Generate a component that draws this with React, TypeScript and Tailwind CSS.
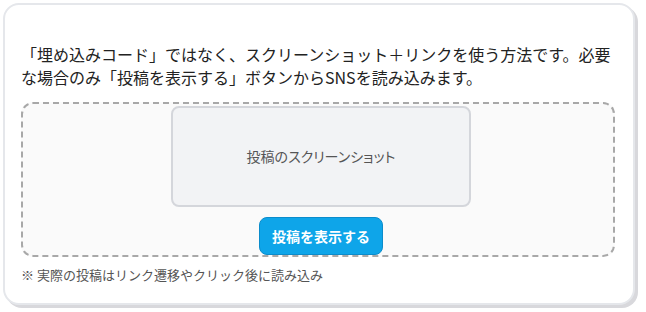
export default function App() {
  return (
    <div className="w-[646px] h-[312px] bg-white p-[3px] font-['Noto_Sans_CJK_JP','Noto_Sans',sans-serif]">
      <div className="w-[632px] h-[302px] rounded-[16px] border-2 border-[#e5e7eb] bg-white shadow-[3px_3px_0_#d8d8dc] pt-[38px] pl-[16px] pr-[18px]">
        <p className="text-[16px] leading-[23px] text-[#222]">
          「埋め込みコード」ではなく、スクリーンショット＋リンクを使う方法です。必要な場合のみ「投稿を表示する」ボタンからSNSを読み込みます。
        </p>

        {/* embed preview */}
        <div className="mt-[13px] h-[155px] rounded-[12px] border-2 border-dashed border-[#a8a8a8] bg-[#fafafa] pt-[2px] pl-[6px] flex flex-col items-center gap-[10px]">
          <div className="w-[300px] h-[101px] shrink-0 rounded-[8px] border-2 border-[#d4d6db] bg-[#f2f3f5] flex items-center justify-center">
            <span className="text-[14px] text-[#555] [font-feature-settings:'palt']">投稿のスクリーンショット</span>
          </div>
          <button className="w-[124px] h-[38px] shrink-0 rounded-[8px] border border-[#0b8ccb] bg-[#0ea5e9] text-white text-[14px] font-bold">
            投稿を表示する
          </button>
        </div>

        <p className="mt-[8px] text-[13px] leading-[20px] text-[#555]">※ 実際の投稿はリンク遷移やクリック後に読み込み</p>
      </div>
    </div>
  )
}
